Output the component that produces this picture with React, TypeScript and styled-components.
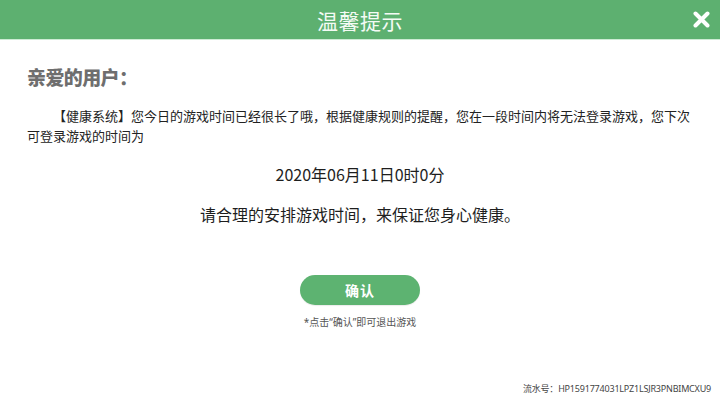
import React from "react";
import styled, { createGlobalStyle } from "styled-components";

const GlobalStyle = createGlobalStyle`
  html, body {
    margin: 0;
    padding: 0;
    background: #ffffff;
  }
  body {
    font-family: "Noto Sans", "Noto Sans CJK SC", sans-serif;
    color: #222;
  }
`;

const Page = styled.div`
  width: 720px;
  height: 405px;
  display: flex;
  flex-direction: column;
  background: #fff;
  overflow: hidden;
`;

const Header = styled.header`
  height: 39px;
  flex: none;
  display: grid;
  grid-template-columns: 1fr auto 1fr;
  align-items: center;
  background: #5db070;
  border-bottom: 1px solid #cdebd4;
`;

const Title = styled.h1`
  grid-column: 2;
  margin: 0;
  font-family: "Noto Sans CJK SC", sans-serif;
  font-weight: 400;
  font-size: 21px;
  letter-spacing: 0.5px;
  color: #f4fbf5;
`;

const CloseButton = styled.button`
  grid-column: 3;
  justify-self: end;
  margin-right: 9px;
  width: 20px;
  height: 20px;
  padding: 0;
  border: none;
  background: transparent;
  display: flex;
  align-items: center;
  justify-content: center;
  cursor: pointer;
`;

const Body = styled.main`
  display: flex;
  flex-direction: column;
  padding: 0 27px;
`;

const Greeting = styled.h2`
  margin: 24px 0 0;
  font-family: "Noto Sans CJK SC", sans-serif;
  font-weight: 900;
  font-size: 19px;
  line-height: 26px;
  letter-spacing: -0.6px;
  color: #6e6e6e;
`;

const Message = styled.p`
  margin: 16px 0 0;
  font-family: "Noto Sans CJK SC", sans-serif;
  font-size: 13px;
  line-height: 20px;
  text-indent: 2em;
  color: #222;
`;

const CenterLine = styled.p<{ $size: number; $gap: number }>`
  margin: ${(p) => p.$gap}px 0 0;
  text-align: center;
  font-family: "Noto Sans CJK SC", sans-serif;
  font-size: ${(p) => p.$size}px;
  line-height: 24px;
  color: #1e1e1e;
`;

const ConfirmButton = styled.button`
  align-self: center;
  margin-top: 49px;
  width: 120px;
  height: 30px;
  border: none;
  border-radius: 15px;
  background: #5db371;
  color: #fff;
  font-family: "Noto Sans CJK SC", sans-serif;
  font-weight: 700;
  font-size: 14px;
  letter-spacing: 1px;
  cursor: pointer;
  box-shadow: 0 1px 1px rgba(0, 0, 0, 0.08);
`;

const Note = styled.p`
  margin: 10px 0 0;
  text-align: center;
  font-size: 10px;
  line-height: 14px;
  color: #555;
`;

const Footer = styled.footer`
  margin-top: 53px;
  padding-right: 9px;
  text-align: right;
  font-size: 9px;
  line-height: 14px;
  letter-spacing: -0.2px;
  color: #444;
`;

export default function App() {
  return (
    <>
      <GlobalStyle />
      <Page>
        <Header>
          <Title>温馨提示</Title>
          <CloseButton aria-label="关闭">
            <svg width="17" height="17" viewBox="0 0 17 17">
              <path
                d="M2.5 2.5 L14.5 14.5 M14.5 2.5 L2.5 14.5"
                stroke="#ffffff"
                strokeWidth="4"
                strokeLinecap="round"
              />
            </svg>
          </CloseButton>
        </Header>
        <Body>
          <Greeting>亲爱的用户：</Greeting>
          <Message>
            【健康系统】您今日的游戏时间已经很长了哦，根据健康规则的提醒，您在一段时间内将无法登录游戏，您下次可登录游戏的时间为
          </Message>
          <CenterLine $size={16} $gap={16}>
            2020年06月11日0时0分
          </CenterLine>
          <CenterLine $size={16} $gap={16}>
            请合理的安排游戏时间，来保证您身心健康。
          </CenterLine>
          <ConfirmButton>确认</ConfirmButton>
          <Note>*点击“确认”即可退出游戏</Note>
        </Body>
        <Footer>流水号：HP1591774031LPZ1LSJR3PNBIMCXU9</Footer>
      </Page>
    </>
  );
}
